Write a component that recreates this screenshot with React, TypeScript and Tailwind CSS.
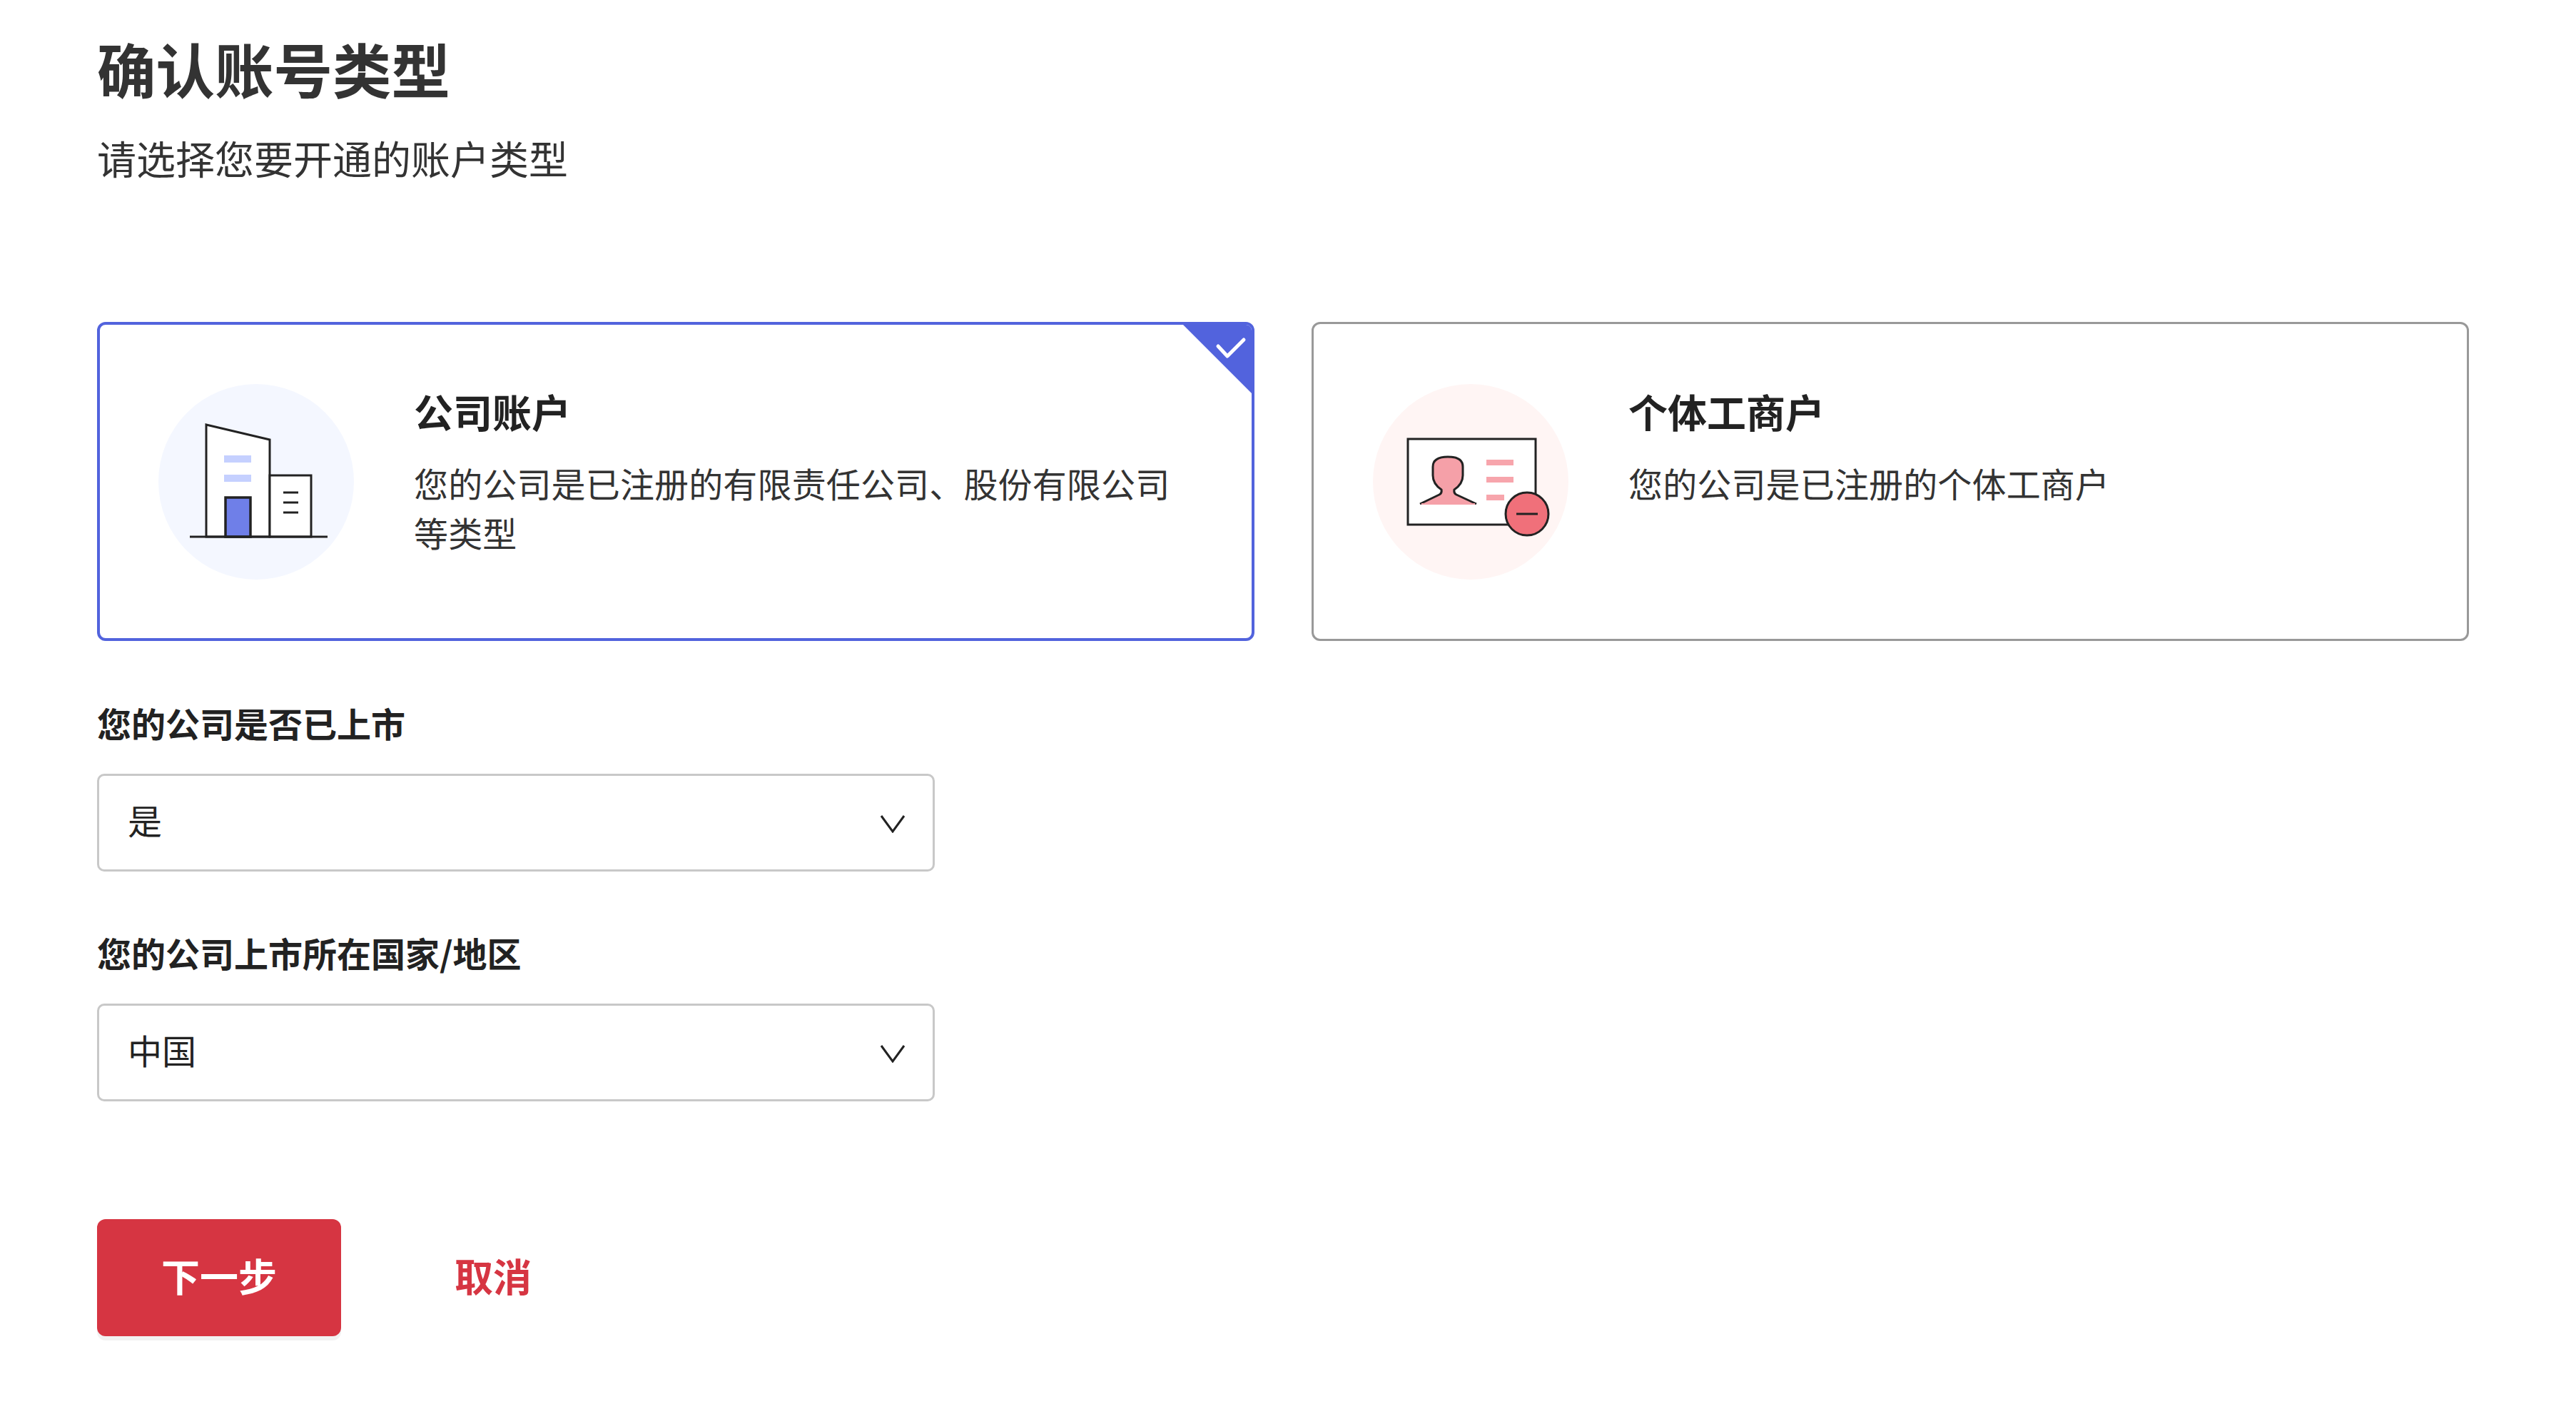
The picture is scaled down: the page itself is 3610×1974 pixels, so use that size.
const font = { fontFamily: '"Noto Sans CJK SC", "Liberation Sans", sans-serif' }

function BuildingIcon() {
  return (
    <svg width="274" height="274" viewBox="0 0 274 274" fill="none">
      <circle cx="137" cy="137" r="137" fill="#f4f7ff" />
      <path d="M67 57 L156 78 V214 H67 Z" fill="#fff" stroke="#222" strokeWidth="3" />
      <path d="M156 128 H214 V214 H156 Z" fill="#fff" stroke="#222" strokeWidth="3" />
      <rect x="92" y="100" width="38" height="10" fill="#c5d0ff" />
      <rect x="92" y="127" width="38" height="10" fill="#c5d0ff" />
      <rect x="94" y="159" width="35" height="55" fill="#6f7fe8" stroke="#222" strokeWidth="3.5" />
      <path d="M175 152 H196 M175 166 H196 M175 180 H196" stroke="#222" strokeWidth="3" />
      <path d="M44 214 H237" stroke="#222" strokeWidth="3" />
    </svg>
  )
}

function IdCardIcon() {
  return (
    <svg width="274" height="274" viewBox="0 0 274 274" fill="none">
      <circle cx="137" cy="137" r="137" fill="#fff5f4" />
      <rect x="49" y="77" width="179" height="120" fill="#fff" stroke="#222" strokeWidth="3" />
      <path
        d="M66 168 L93 155 Q97 153 96 148 Q84 140 84 128 V116 Q84 102 105 102 Q126 102 126 116 V128 Q126 140 114 148 Q113 153 117 155 L145 168"
        fill="#f5a0a8"
        stroke="#222"
        strokeWidth="3"
      />
      <path d="M68 168 H143" stroke="#f5a0a8" strokeWidth="2" />
      <rect x="159" y="106" width="38" height="8" fill="#f7a5ac" />
      <rect x="159" y="130" width="38" height="8" fill="#f7a5ac" />
      <rect x="159" y="155" width="25" height="8" fill="#f7a5ac" />
      <circle cx="216" cy="182" r="30" fill="#f0707a" stroke="#222" strokeWidth="3" />
      <path d="M201 182 H231" stroke="#222" strokeWidth="3" />
    </svg>
  )
}

function AccountCard({
  title,
  desc,
  icon,
  selected,
}: {
  title: string
  desc: string
  icon: React.ReactNode
  selected?: boolean
}) {
  return (
    <div
      className={`relative flex h-[447px] items-center gap-[84px] overflow-hidden rounded-[12px] bg-white pr-[100px] ${
        selected ? 'border-[4px] border-[#5263dd] pl-[82px]' : 'border-[3px] border-[#999999] pl-[83px]'
      }`}
    >
      <div className="shrink-0">{icon}</div>
      <div className="flex h-[276px] flex-col">
        <div className="text-[55px] font-bold leading-[76px] text-[#222222]">{title}</div>
        <p className="mt-[29px] text-[48px] leading-[69px] tracking-[0.15px] text-[#333333]">{desc}</p>
      </div>
      {selected && (
        <svg className="absolute right-0 top-0" width="96" height="96" viewBox="0 0 96 96">
          <path d="M0 0 H96 V96 Z" fill="#5263dd" />
          <path d="M49 30 L62 44 L85 21" fill="none" stroke="#fff" strokeWidth="5" strokeLinecap="round" strokeLinejoin="round" />
        </svg>
      )}
    </div>
  )
}

function SelectField({ label, value }: { label: string; value: string }) {
  return (
    <div className="w-[1174px]">
      <div className="text-[48px] font-bold leading-[64px] text-[#222222]">{label}</div>
      <div className="mt-[40px] flex h-[137px] items-center justify-between rounded-[10px] border-[3px] border-[#c8c8c8] bg-white pl-[40px] pr-[38px]">
        <span className="mb-[10px] text-[48px] leading-[64px] text-[#222222]">{value}</span>
        <svg width="36" height="26" viewBox="0 0 36 26" fill="none" className="mt-[2px]">
          <path d="M2 2 L18 24 L34 2" stroke="#222" strokeWidth="3" />
        </svg>
      </div>
    </div>
  )
}

export default function App() {
  return (
    <div className="min-h-[1974px] bg-white pl-[136px] pr-[150px]" style={font}>
      <h1 className="pt-[42px] text-[82.5px] font-bold leading-[106px] text-[#333333]">确认账号类型</h1>
      <p className="mt-[33px] text-[55px] leading-[78px] text-[#333333]">请选择您要开通的账户类型</p>

      <div className="mt-[192px] grid grid-cols-2 gap-[80px]">
        <AccountCard
          selected
          title="公司账户"
          desc="您的公司是已注册的有限责任公司、股份有限公司等类型"
          icon={<BuildingIcon />}
        />
        <AccountCard title="个体工商户" desc="您的公司是已注册的个体工商户" icon={<IdCardIcon />} />
      </div>

      <div className="mt-[82px] flex flex-col gap-[81px]">
        <SelectField label="您的公司是否已上市" value="是" />
        <SelectField label="您的公司上市所在国家/地区" value="中国" />
      </div>

      <div className="mt-[165px] flex items-center gap-[159px]">
        <button className="h-[164px] w-[342px] rounded-[12px] bg-[#d63542] pb-[8px] text-[54px] font-bold text-white shadow-[0_6px_0_#f2f2f2]">
          下一步
        </button>
        <button className="pb-[8px] text-[54px] font-bold text-[#d63542]">取消</button>
      </div>
    </div>
  )
}
